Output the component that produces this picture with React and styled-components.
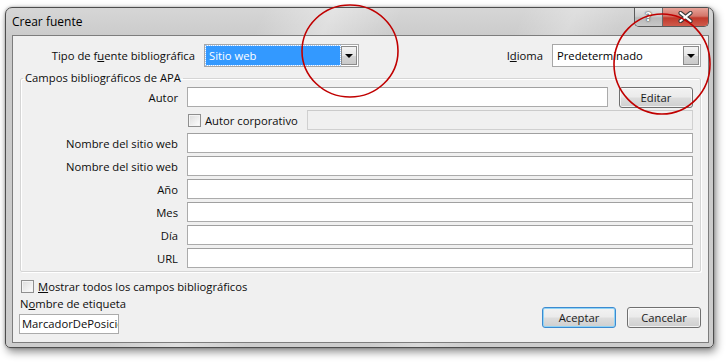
import React from 'react'
import styled, { createGlobalStyle } from 'styled-components'

const GlobalStyle = createGlobalStyle`
  html, body {
    margin: 0;
    padding: 0;
    background: #ffffff;
  }
  body {
    font-family: "Open Sans", "Noto Sans", "Liberation Sans", sans-serif;
    font-size: 11.25px;
    color: #0c0c0c;
  }
`

export default function App() {
  return (
    <>
      <GlobalStyle />
      <Page>
        <Window>
          <TitleBar>
            <Title>Crear fuente</Title>
            <CaptionButtons>
              <HelpButton>?</HelpButton>
              <CloseButton>
                <svg width="15" height="12" viewBox="0 0 15 12">
                  <path d="M2.5 2 L12.5 10 M12.5 2 L2.5 10" stroke="#3b3b3b" strokeWidth="4.2" strokeLinecap="round" />
                  <path d="M2.5 2 L12.5 10 M12.5 2 L2.5 10" stroke="#ffffff" strokeWidth="2.2" strokeLinecap="round" />
                </svg>
              </CloseButton>
            </CaptionButtons>
          </TitleBar>

          <Client>
            <TopRow>
              <TopLabel>Tipo de f<u>u</u>ente bibliográfica</TopLabel>
              <Combo width={155}>
                <ComboValue selected>Sitio web</ComboValue>
                <DropButton><Arrow /></DropButton>
              </Combo>
              <Spacer />
              <span>I<u>d</u>ioma</span>
              <Combo width={149}>
                <ComboValue>Predeterminado</ComboValue>
                <DropButton><Arrow /></DropButton>
              </Combo>
            </TopRow>

            <Group>
              <Legend>Campos bibliográficos de APA</Legend>
              <FieldRow>
                <FieldLabel>Autor</FieldLabel>
                <Input />
                <Button width={74}>Editar</Button>
              </FieldRow>
              <FieldRow>
                <FieldLabel />
                <CheckLabel width={119}>
                  <CheckBox />
                  Autor corporativo
                </CheckLabel>
                <Input disabled />
              </FieldRow>
              <FieldRow>
                <FieldLabel>Nombre del sitio web</FieldLabel>
                <Input />
              </FieldRow>
              <FieldRow>
                <FieldLabel>Nombre del sitio web</FieldLabel>
                <Input />
              </FieldRow>
              <FieldRow>
                <FieldLabel>Año</FieldLabel>
                <Input />
              </FieldRow>
              <FieldRow>
                <FieldLabel>Mes</FieldLabel>
                <Input />
              </FieldRow>
              <FieldRow>
                <FieldLabel>Día</FieldLabel>
                <Input />
              </FieldRow>
              <FieldRow>
                <FieldLabel>URL</FieldLabel>
                <Input />
              </FieldRow>
            </Group>

            <Footer>
              <FooterLeft>
                <CheckLabel>
                  <CheckBox />
                  <span><u>M</u>ostrar todos los campos bibliográficos</span>
                </CheckLabel>
                <TagLabel>N<u>o</u>mbre de etiqueta</TagLabel>
                <TagInput>MarcadorDePosición1</TagInput>
              </FooterLeft>
              <FooterButtons>
                <Button width={74} primary>Aceptar</Button>
                <Button width={74}>Cancelar</Button>
              </FooterButtons>
            </Footer>
          </Client>
        </Window>

        <Annotations width="727" height="363" viewBox="0 0 727 363">
          <ellipse cx="350" cy="51" rx="48" ry="46" fill="none" stroke="#c00000" strokeWidth="1.6" />
          <ellipse cx="662" cy="64" rx="48" ry="50" fill="none" stroke="#c00000" strokeWidth="1.6" />
        </Annotations>
      </Page>
    </>
  )
}

const Page = styled.div`
  position: relative;
  width: 727px;
  height: 363px;
  overflow: hidden;
  padding: 7px 0 0 5px;
  box-sizing: border-box;
`;
const Window = styled.div`
  width: 709px;
  height: 341px;
  box-sizing: border-box;
  border: 1px solid #4d4d4d;
  border-radius: 7px 7px 5px 5px;
  padding: 0 4px 4px 6px;
  display: flex;
  flex-direction: column;
  background:
    linear-gradient(115deg, transparent 30%, rgba(255,255,255,0.35) 38%, transparent 46%, transparent 60%, rgba(255,255,255,0.25) 66%, transparent 72%),
    linear-gradient(180deg, #d6d6d6 0%, #c9c9c9 10%, #cdcdcd 100%);
  box-shadow: 2px 4px 9px rgba(0,0,0,0.45), 0 0 3px rgba(0,0,0,0.3);
`;
const TitleBar = styled.div`
  height: 27px;
  display: flex;
  align-items: flex-start;
  justify-content: space-between;
  flex-shrink: 0;
`;
const Title = styled.div`
  font-size: 12px;
  color: #000;
  padding-top: 5px;
`;
const CaptionButtons = styled.div`
  display: flex;
  margin-top: 0;
  border: 1px solid #5a5a5a;
  border-top: none;
  border-radius: 0 0 5px 5px;
  overflow: hidden;
  height: 18px;
`;
const HelpButton = styled.div`
  width: 27px;
  display: flex;
  align-items: center;
  justify-content: center;
  font-family: "DejaVu Sans", sans-serif;
  font-weight: bold;
  font-size: 12px;
  color: #fff;
  text-shadow: 0 0 2px #333, 0 0 1px #333;
  border-right: 1px solid #6a6a6a;
  background: linear-gradient(180deg, #e4e4e4 0%, #cfcfcf 45%, #b9b9b9 55%, #c8c8c8 100%);
`;
const CloseButton = styled.div`
  width: 45px;
  display: flex;
  align-items: center;
  justify-content: center;
  background: linear-gradient(180deg, #e7a399 0%, #d4766a 45%, #c1392b 55%, #cf5b4c 100%);
`;
const Client = styled.div`
  flex: 1;
  border: 1px solid #7d7d7d;
  background: #f0f0f0;
  padding: 8px 7px 0 7px;
  display: flex;
  flex-direction: column;
`;
const TopRow = styled.div`
  display: flex;
  align-items: center;
  gap: 9px;
  height: 23px;
`;
const TopLabel = styled.div`
  width: 175px;
  text-align: right;
`;
const Spacer = styled.div`
  flex: 1;
`;
const Combo = styled.div`
  width: ${p => p.width}px;
  height: 23px;
  box-sizing: border-box;
  border: 1px solid #a7a7a7;
  background: #fff;
  display: flex;
  align-items: stretch;
  padding: 1px;
`;
const ComboValue = styled.div`
  flex: 1;
  display: flex;
  align-items: center;
  padding-left: 3px;
  margin-right: 1px;
  background: ${p => (p.selected ? '#3399ff' : 'transparent')};
  color: ${p => (p.selected ? '#fff' : '#000')};
  outline: ${p => (p.selected ? '1px dotted #9ac8ff' : 'none')};
`;
const DropButton = styled.div`
  width: 16px;
  box-sizing: border-box;
  border: 1px solid #8a8a8a;
  background: linear-gradient(180deg, #f3f3f3 0%, #e5e5e5 50%, #d4d4d4 51%, #cacaca 100%);
  display: flex;
  align-items: center;
  justify-content: center;
`;
const Arrow = styled.div`
  width: 0;
  height: 0;
  border-left: 4px solid transparent;
  border-right: 4px solid transparent;
  border-top: 4px solid #000;
`;
const Group = styled.fieldset`
  margin: 4px 0 0 0;
  padding: 0 7px 3px 0;
  border: 1px solid #d5d5d5;
  border-radius: 2px;
  box-shadow: inset 1px 1px 0 #fff, 1px 1px 0 #fff;
  display: flex;
  flex-direction: column;
  gap: 3px;
`;
const Legend = styled.legend`
  padding: 0 2px;
  margin-left: 2px;
  line-height: 14px;
  margin-bottom: 2px;
`;
const FieldRow = styled.div`
  display: flex;
  align-items: center;
  height: 20px;
`;
const FieldLabel = styled.div`
  width: 157px;
  margin-right: 9px;
  text-align: right;
  flex-shrink: 0;
`;
const Input = styled.div`
  flex: 1;
  height: 20px;
  box-sizing: border-box;
  border: 1px solid ${p => (p.disabled ? '#d0d0d0' : '#ababab')};
  border-top-color: ${p => (p.disabled ? '#cbcbcb' : '#a0a0a0')};
  background: ${p => (p.disabled ? '#f0f0f0' : '#fff')};
`;
const Button = styled.div`
  width: ${p => p.width}px;
  height: 21px;
  box-sizing: border-box;
  margin-left: 11px;
  display: flex;
  align-items: center;
  justify-content: center;
  border: 1px solid ${p => (p.primary ? '#3c8ad0' : '#707070')};
  border-radius: 3px;
  color: #1a1a1a;
  background: linear-gradient(180deg, #f2f2f2 0%, #ebebeb 48%, #dddddd 52%, #cfcfcf 100%);
  box-shadow: inset 0 0 0 1px ${p => (p.primary ? '#8fd3f5' : 'rgba(255,255,255,0.7)')};
`;
const CheckLabel = styled.label`
  display: flex;
  align-items: center;
  gap: 4px;
  width: ${p => (p.width ? `${p.width}px` : 'auto')};
  flex-shrink: 0;
  padding-left: 1px;
`;
const CheckBox = styled.span`
  width: 13px;
  height: 13px;
  box-sizing: border-box;
  border: 1px solid #8f8f8f;
  background: linear-gradient(135deg, #dcdcdc 0%, #f0f0f0 60%, #ffffff 100%);
  box-shadow: inset 0 0 0 1px #f4f4f4;
  flex-shrink: 0;
`;
const Footer = styled.div`
  display: flex;
  align-items: flex-end;
  justify-content: space-between;
  margin-top: 7px;
`;
const FooterLeft = styled.div`
  display: flex;
  flex-direction: column;
  align-items: flex-start;
`;
const TagLabel = styled.div`
  margin-top: 2px;
  line-height: 16px;
`;
const TagInput = styled.div`
  width: 100px;
  height: 20px;
  margin-top: 2px;
  margin-left: -1px;
  box-sizing: border-box;
  border: 1px solid #ababab;
  background: #fff;
  padding-left: 2px;
  line-height: 18px;
  overflow: hidden;
  white-space: nowrap;
`;
const FooterButtons = styled.div`
  display: flex;
  margin-bottom: 6px;
`;
const Annotations = styled.svg`
  position: absolute;
  left: 0;
  top: 0;
  pointer-events: none;
`;
